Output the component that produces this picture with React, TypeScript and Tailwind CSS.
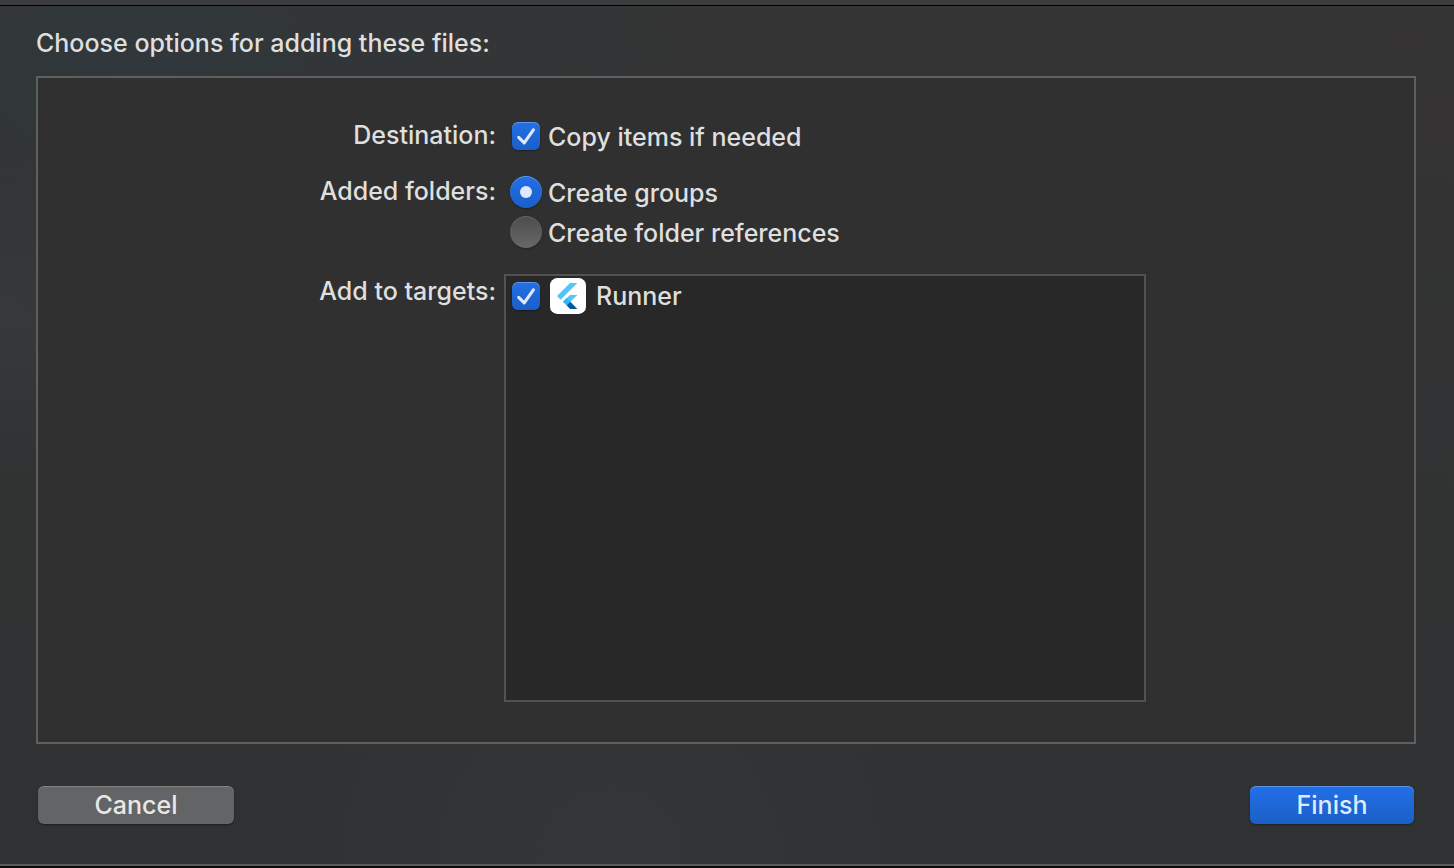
import { useState } from "react";

const blueFace =
  "bg-linear-to-b from-[#226fe6] to-[#1c5fc8] shadow-[inset_0_1px_0_rgba(255,255,255,0.28),0_1px_2px_rgba(0,0,0,0.35)]";
const greyFace =
  "bg-linear-to-b from-[#4d4d4d] to-[#686868] shadow-[inset_0_1px_0_rgba(255,255,255,0.12),0_1px_2px_rgba(0,0,0,0.3)]";

function Checkbox({ id, checked, onChange }: { id: string; checked: boolean; onChange: (v: boolean) => void }) {
  return (
    <span className="grid size-7 shrink-0 place-items-center">
      <input
        id={id}
        type="checkbox"
        checked={checked}
        onChange={(e) => onChange(e.target.checked)}
        className={`col-start-1 row-start-1 size-7 appearance-none rounded-md ${checked ? blueFace : greyFace}`}
      />
      {checked && (
        <svg viewBox="0 0 28 28" className="pointer-events-none col-start-1 row-start-1 size-7" aria-hidden="true">
          <path d="M6.7 15.4 12.2 20.8 21.4 7.8" fill="none" stroke="#e0eafb" strokeWidth="3.1" strokeLinecap="round" strokeLinejoin="round" />
        </svg>
      )}
    </span>
  );
}

function Radio({ id, checked, onSelect }: { id: string; checked: boolean; onSelect: () => void }) {
  return (
    <span className="grid size-8 shrink-0 place-items-center">
      <input
        id={id}
        type="radio"
        name="folders"
        checked={checked}
        onChange={onSelect}
        className={`col-start-1 row-start-1 size-8 appearance-none rounded-full ${checked ? blueFace : greyFace}`}
      />
      {checked && <span className="pointer-events-none col-start-1 row-start-1 size-3 rounded-full bg-[#dde8fb]" />}
    </span>
  );
}

function FlutterIcon() {
  return (
    <svg viewBox="0 0 108 108" className="size-9 shrink-0" aria-hidden="true">
      <rect width="108" height="108" rx="22" fill="#fff" />
      <path d="M21 54 60 15h22L32 65z" fill="#54c5f8" />
      <path d="M60 51h22L50 82 39 71z" fill="#54c5f8" />
      <path d="M39 71 50 60 61 71 50 82z" fill="#29b6f6" />
      <path d="M50 82 61 71 82 93H60z" fill="#01579b" />
    </svg>
  );
}

export default function App() {
  const [copy, setCopy] = useState(true);
  const [mode, setMode] = useState("groups");
  const [runner, setRunner] = useState(true);

  return (
    <div className="flex min-h-screen flex-col bg-[#303233] bg-[radial-gradient(ellipse_at_10%_8%,#31373b_0%,transparent_30%),radial-gradient(ellipse_at_97%_5%,#363435_0%,transparent_25%),radial-gradient(ellipse_at_0%_35%,#38393a_0%,transparent_20%),radial-gradient(ellipse_at_42%_100%,#353637_0%,transparent_30%),linear-gradient(to_bottom,#343434,#2f3132)] font-['Inter','Liberation_Sans',sans-serif] text-[25px] leading-8 font-medium text-[#dfdfdf]">
      <div className="h-[6px] border-b border-black bg-[#3b3c3d]" />
      <main className="flex flex-1 flex-col pr-[38px] pl-9">
        <h1 className="flex h-[70px] items-center pt-1">Choose options for adding these files:</h1>
        <section className="flex flex-1 flex-col border-2 border-[#5f5f5f] bg-[#303030] pt-10 pr-[268px] pb-10">
          <div className="grid flex-1 grid-cols-[1fr_642px] grid-rows-[34px_74px_1fr] gap-x-2 gap-y-[22px]">
            <div className="pt-px text-right">Destination:</div>
            <div className="flex items-center gap-2 pt-[2px] pl-2">
              <Checkbox id="copy" checked={copy} onChange={setCopy} />
              <label htmlFor="copy" className="pt-px">Copy items if needed</label>
            </div>

            <div className="pt-px text-right">Added folders:</div>
            <div className="flex flex-col gap-2 pt-[2px] pl-[6px]">
              <div className="flex h-8 items-center gap-[6px]">
                <Radio id="groups" checked={mode === "groups"} onSelect={() => setMode("groups")} />
                <label htmlFor="groups" className="pt-px">Create groups</label>
              </div>
              <div className="flex h-8 items-center gap-[6px]">
                <Radio id="references" checked={mode === "references"} onSelect={() => setMode("references")} />
                <label htmlFor="references" className="pt-px">Create folder references</label>
              </div>
            </div>

            <div className="pt-[5px] text-right">Add to targets:</div>
            <div className="mt-1 border-2 border-[#525252] bg-[#282828] px-[6px] py-[2px]">
              <div className="flex items-center">
                <Checkbox id="runner" checked={runner} onChange={setRunner} />
                <label htmlFor="runner" className="ml-[10px] flex items-center gap-[10px]">
                  <FlutterIcon />
                  Runner
                </label>
              </div>
            </div>
          </div>
        </section>
        <footer className="flex justify-between pt-[42px] pb-10 pl-[2px]">
          <button type="button" className="h-[38px] w-[196px] rounded-md bg-[#636465] text-[#e8e8e8] shadow-[inset_0_1px_0_rgba(255,255,255,0.2),0_1px_2px_rgba(0,0,0,0.4)]">
            Cancel
          </button>
          <button type="button" className={`mr-[2px] h-[38px] w-[164px] rounded-md text-[#dfeafc] ${blueFace}`}>
            Finish
          </button>
        </footer>
      </main>
      <div className="h-1 border-t-2 border-[#5a5b5c] bg-[#0c0c0c]" />
    </div>
  );
}
